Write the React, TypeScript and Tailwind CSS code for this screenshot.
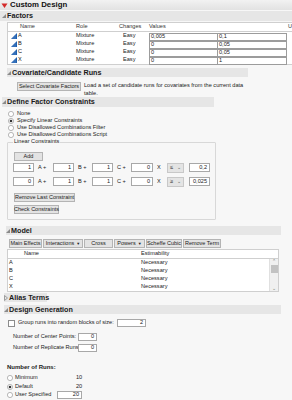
import React from 'react'

function OpenTri() {
  return (
    <svg width="4" height="4" viewBox="0 0 4 4" className="shrink-0">
      <polygon points="4,0 4,4 0,4" fill="#8a8a8a" />
    </svg>
  )
}

function ClosedTri() {
  return (
    <svg width="4" height="6" viewBox="0 0 4 6" className="shrink-0">
      <polygon points="0.5,0.5 3.5,3 0.5,5.5" fill="none" stroke="#8a8a8a" strokeWidth="0.8" />
    </svg>
  )
}

function Bar({ title, className, open = true }: { title: string; className: string; open?: boolean }) {
  return (
    <div className={`flex items-center gap-[1px] bg-[#e6e6e6] font-bold text-[7.2px] text-[#1a1a1a] ${className}`}>
      {open ? <OpenTri /> : <ClosedTri />}
      <span>{title}</span>
    </div>
  )
}

function Btn({ children, className = '' }: { children: React.ReactNode; className?: string }) {
  return (
    <div
      className={`flex items-center justify-center bg-[#e3e3e3] border border-[#b4b4b4] text-[5.5px] text-[#222] ${className}`}
    >
      {children}
    </div>
  )
}

function Box({ value, className = '' }: { value: string; className?: string }) {
  return (
    <div className={`flex items-center justify-end bg-white border border-[#a8a8a8] pr-[2px] text-[5.6px] ${className}`}>
      {value}
    </div>
  )
}

function Radio({ checked = false }: { checked?: boolean }) {
  return (
    <svg width="6" height="6" viewBox="0 0 6 6" className="shrink-0">
      <circle cx="3" cy="3" r="2.6" fill="white" stroke="#8c8c8c" strokeWidth="0.6" />
      {checked && <circle cx="3" cy="3" r="1.3" fill="#333" />}
    </svg>
  )
}

function MixIcon() {
  return (
    <svg width="6" height="6" viewBox="0 0 6 6" className="shrink-0">
      <polygon points="0,6 6,0 6,6" fill="#1f5fae" />
      <line x1="2" y1="6" x2="2" y2="4" stroke="#7aa6dc" strokeWidth="0.5" />
      <line x1="4" y1="6" x2="4" y2="2" stroke="#7aa6dc" strokeWidth="0.5" />
    </svg>
  )
}

const factors = [
  { name: 'A', lo: '0,005', hi: '0,1' },
  { name: 'B', lo: '0', hi: '0,05' },
  { name: 'C', lo: '0', hi: '0,05' },
  { name: 'X', lo: '0', hi: '1' },
]

const constraints = [
  { a: '1', b: '1', c: '1', x: '0', op: '≤', v: '0,2' },
  { a: '0', b: '1', c: '1', x: '0', op: '≥', v: '0,025' },
]

export default function App() {
  return (
    <div className="w-[292px] h-[400px] overflow-hidden bg-[#f7f7f7] text-[#222] font-['Liberation_Sans',Arial,sans-serif] text-[5.6px] leading-none whitespace-nowrap flex flex-col">
      {/* Title */}
      <div className="h-[10px] flex items-center gap-[2px] pl-[1px] bg-gradient-to-b from-[#f2f2f2] to-[#e2e2e2]">
        <svg width="7" height="7" viewBox="0 0 7 7">
          <polygon points="0.5,1.5 6.5,1.5 3.5,6" fill="#d42a2a" />
        </svg>
        <span className="font-bold text-[7.8px] text-[#111]">Custom Design</span>
      </div>

      {/* Factors */}
      <Bar title="Factors" className="mt-[1px] h-[10px] pl-[2px]" />
      <div className="mt-[1px] ml-[7px] bg-white border-l border-b border-[#cfcfcf]">
        <div className="h-[10px] flex items-center border-t border-b border-[#cfcfcf] text-[#333]">
          <span className="w-[68px] pl-[12px]">Name</span>
          <span className="w-[43px]">Role</span>
          <span className="w-[30px]">Changes</span>
          <span className="w-[139px]">Values</span>
          <span>U</span>
        </div>
        {factors.map(f => (
          <div key={f.name} className="h-[8px] flex items-center">
            <div className="w-[68px] flex items-center gap-[1px] pl-[3px]">
              <MixIcon />
              <span>{f.name}</span>
            </div>
            <span className="w-[43px]">Mixture</span>
            <span className="w-[30px] pl-[4px]">Easy</span>
            <div className="w-[69px] h-[8px] flex items-center border border-[#9c9c9c] -mb-[1px] pl-[1px]">{f.lo}</div>
            <div className="w-[69px] h-[8px] flex items-center border border-l-0 border-[#9c9c9c] -mb-[1px] pl-[1px]">{f.hi}</div>
          </div>
        ))}
      </div>

      {/* Covariate */}
      <Bar title="Covariate/Candidate Runs" className="mt-[3px] h-[9px] ml-[7px] w-[241px]" />
      <div className="mt-[4px] ml-[17px] flex items-start gap-[3px]">
        <Btn className="mt-[1px] h-[9px] w-[64px]">Select Covariate Factors</Btn>
        <div className="leading-[8px]">
          <div>Load a set of candidate runs for covariates from the current data</div>
          <div>table.</div>
        </div>
      </div>

      {/* Define Factor Constraints */}
      <Bar title="Define Factor Constraints" className="h-[10px] ml-[2px] w-[212px]" />
      <div className="mt-[3px] ml-[8px] flex flex-col">
        {[
          ['None', false],
          ['Specify Linear Constraints', true],
          ['Use Disallowed Combinations Filter', false],
          ['Use Disallowed Combinations Script', false],
        ].map(([label, on]) => (
          <div key={label as string} className="h-[7px] flex items-center gap-[3px]">
            <Radio checked={on as boolean} />
            <span>{label as string}</span>
          </div>
        ))}
      </div>

      <fieldset className="ml-[7px] w-[207px] border border-[#d8d8d8] rounded-[1px] px-[5px] pb-[5px] pt-0">
        <legend className="px-[1px] h-[8px] flex items-center">Linear Constraints</legend>
        <Btn className="mt-[6px] h-[9px] w-[29px] ml-[1px]">Add</Btn>
        {constraints.map((c, i) => (
          <div key={i} className={`${i === 0 ? 'mt-[2px]' : 'mt-[5px]'} h-[9px] flex items-center`}>
            <Box value={c.a} className="w-[21px] h-[9px]" />
            <span className="w-[19px] pl-[4px]">A +</span>
            <Box value={c.b} className="w-[21px] h-[9px]" />
            <span className="w-[18px] pl-[4px]">B +</span>
            <Box value={c.c} className="w-[21px] h-[9px]" />
            <span className="w-[18px] pl-[4px]">C +</span>
            <Box value={c.x} className="w-[22px] h-[9px]" />
            <span className="w-[14px] pl-[4px]">X</span>
            <div className="w-[17px] h-[10px] flex items-center justify-between px-[2px] bg-[#e4e4e4] border border-[#c8c8c8]">
              <span>{c.op}</span>
              <span className="text-[5px] text-[#555]">⌄</span>
            </div>
            <Box value={c.v} className="ml-[5px] w-[21px] h-[9px]" />
          </div>
        ))}
        <Btn className="mt-[7px] h-[9px] w-[61px] ml-[1px]">Remove Last Constraint</Btn>
        <Btn className="mt-[3px] h-[9px] w-[45px] ml-[1px]">Check Constraints</Btn>
      </fieldset>

      {/* Model */}
      <Bar title="Model" className="mt-[6px] h-[9px] ml-[6px] w-[275px]" />
      <div className="mt-[4px] ml-[9px] h-[9px] flex">
        <Btn className="w-[33px] h-[9px]">Main Effects</Btn>
        <Btn className="ml-[1px] w-[40px] h-[9px]">Interactions <span className="ml-[2px] text-[4px]">▼</span></Btn>
        <Btn className="ml-[1px] w-[29px] h-[9px]">Cross</Btn>
        <Btn className="ml-[1px] w-[31px] h-[9px]">Powers <span className="ml-[2px] text-[4px]">▼</span></Btn>
        <Btn className="ml-[1px] w-[36px] h-[9px]">Scheffe Cubic</Btn>
        <Btn className="ml-[1px] w-[38px] h-[9px]">Remove Term</Btn>
      </div>
      <div className="mt-[1px] ml-[7px] w-[272px] bg-white border border-[#cfcfcf]">
        <div className="h-[9px] flex items-center border-b border-[#cfcfcf]">
          <span className="w-[133px] pl-[16px]">Name</span>
          <span>Estimability</span>
        </div>
        <div className="flex">
          <div className="flex-1">
            {['A', 'B', 'C', 'X'].map(t => (
              <div key={t} className="h-[8px] flex items-center">
                <span className="w-[133px] pl-[1px]">{t}</span>
                <span>Necessary</span>
              </div>
            ))}
          </div>
          <div className="w-[9px] flex flex-col items-center bg-[#f0f0f0] border-l border-[#e0e0e0]">
            <span className="h-[5px] text-[5px] text-[#777] leading-[5px]">⌃</span>
            <div className="mt-[1px] w-[7px] h-[8px] bg-[#c2c2c2]" />
            <div className="flex-1" />
            <span className="h-[5px] text-[5px] text-[#777] leading-[5px]">⌄</span>
          </div>
        </div>
      </div>

      {/* Alias Terms */}
      <Bar title="Alias Terms" open={false} className="mt-[1px] h-[9px] ml-[4px] w-[43px]" />

      {/* Design Generation */}
      <Bar title="Design Generation" className="mt-[3px] h-[9px] ml-[4px] w-[277px]" />
      <div className="mt-[5px] ml-[8px] h-[8px] flex items-center">
        <div className="w-[7px] h-[7px] bg-white border border-[#8c8c8c]" />
        <span className="ml-[3px] w-[99px]">Group runs into random blocks of size:</span>
        <Box value="2" className="w-[29px] h-[8px]" />
      </div>

      <div className="mt-[6px] ml-[13px] h-[8px] flex items-center">
        <span className="w-[65px]">Number of Center Points:</span>
        <Box value="0" className="w-[19px] h-[8px]" />
      </div>
      <div className="mt-[3px] ml-[13px] h-[8px] flex items-center">
        <span className="w-[65px]">Number of Replicate Runs:</span>
        <Box value="0" className="w-[19px] h-[8px]" />
      </div>

      <div className="mt-[11px] ml-[7px] h-[8px] flex items-center font-bold text-[6px]">Number of Runs:</div>
      <div className="mt-[3px] ml-[7px] h-[8px] flex items-center">
        <Radio />
        <span className="ml-[2px] w-[61px]">Minimum</span>
        <span>10</span>
      </div>
      <div className="mt-[1px] ml-[7px] h-[8px] flex items-center">
        <Radio checked />
        <span className="ml-[2px] w-[61px]">Default</span>
        <span>20</span>
      </div>
      <div className="ml-[7px] h-[8px] flex items-center">
        <Radio />
        <span className="ml-[2px] w-[42px]">User Specified</span>
        <Box value="20" className="w-[25px] h-[8px]" />
      </div>
    </div>
  )
}
